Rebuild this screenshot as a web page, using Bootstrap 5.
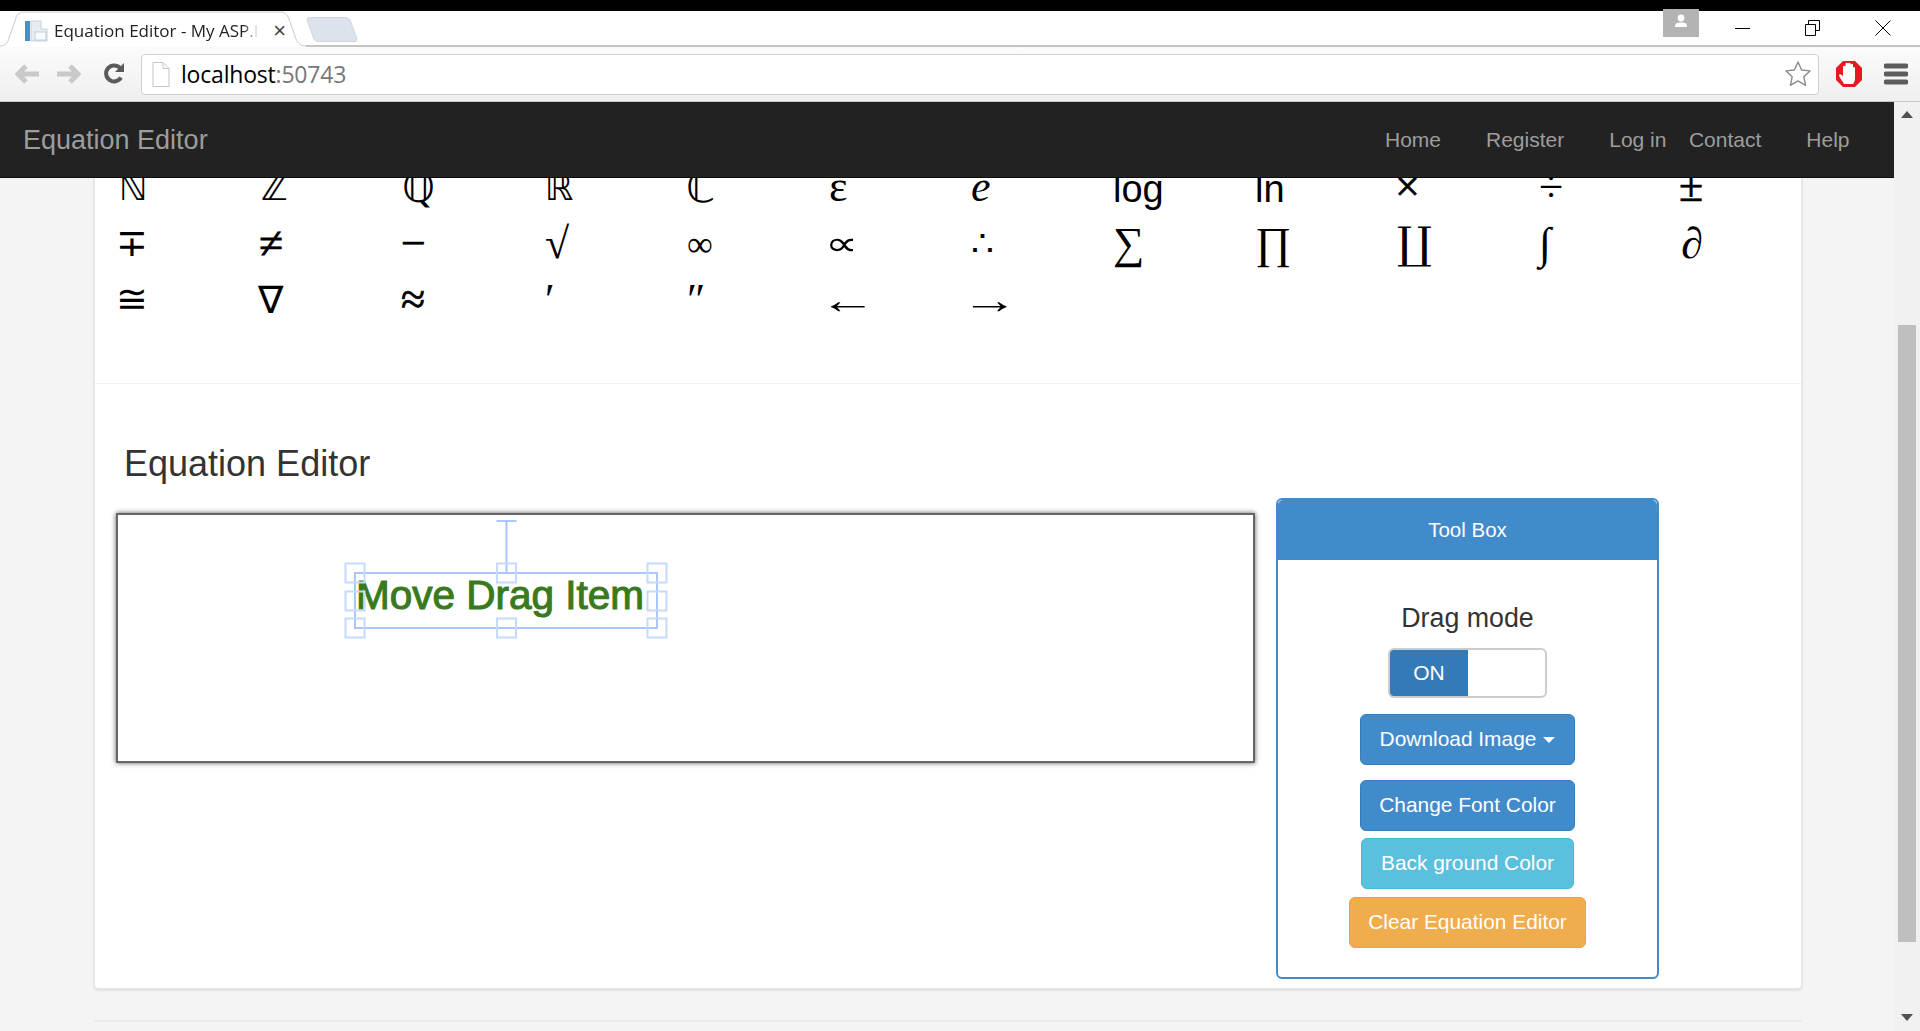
<!DOCTYPE html>
<html lang="en">
<head>
  <meta charset="UTF-8" />
  <title>Equation Editor - My ASP.NET Application</title>
  <link href="https://cdn.jsdelivr.net/npm/bootstrap@5.3.3/dist/css/bootstrap.min.css" rel="stylesheet" />
  <style>
    html, body { height: 1031px; overflow: hidden; }
    body { background: #000; font-family: "Liberation Sans", Arial, sans-serif; color: #333; padding-top: 11px; }
    /* browser window */
    .tab-strip { height: 36px; background: #fff; border-bottom: 2px solid #c4c4c4; }
    .tab-inner { width: 306px; height: 36px; padding: 3px 20px 0 24px; position: relative; background: #fff; flex: none; }
    .tab-edge { position: absolute; left: 0; top: 0; }
    .tab-title { font-family: "Open Sans", sans-serif; font-size: 17px; color: #222; white-space: nowrap; position: relative; margin-left: 6px; -webkit-mask-image: linear-gradient(to right, #000 92%, transparent); }
    .tab-close { font-size: 22px; line-height: 1; color: #444; position: relative; }
    .tab-new { width: 44px; height: 25px; margin: 6px 0 0 4px; background: #dde3ec; border: 1px solid #cfd4dc; border-radius: 4px; transform: skewX(20deg); }
    .win-user { width: 36px; height: 28px; background: #b3b3b3; margin-top: -2px; }
    .win-btns { margin-left: 36px; gap: 54px; padding-right: 29px; padding-top: 9px; }
    .tool-bar { height: 55px; background: linear-gradient(#fbfbfb, #efefef); border-bottom: 1px solid #c8c8c8; padding-left: 15px; }
    .reload-ico { margin-left: 22px; }
    .url-box { width: 1678px; height: 41px; margin-left: 16px; background: #fff; border: 1px solid #cfcfcf; border-radius: 4px; padding: 0 6px 0 10px; }
    .url-text { font-family: "Open Sans", sans-serif; font-size: 23px; margin-left: 11px; color: #000; letter-spacing: -.2px; }
    .url-text span { color: #777; }
    .menu-ico { margin-right: 12px; }
    /* page */
    .view-row { height: 929px; }
    .page-wrap { width: 1894px; background: #f4f4f4; overflow: hidden; }
    .scroll-rail { width: 26px; background: #f1f1f1; padding: 0 2px; }
    .scroll-thumb { height: 617px; background: #bfbfbf; margin: 0 2px; }
    .scroll-up { height: 223px; }
    .top-nav { height: 76px; background: #222; border-bottom: 1px solid #0c0c0c; position: relative; z-index: 5; padding-top: 1px !important; }
    .top-nav .navbar-brand { font-size: 27px; color: #9d9d9d; margin-left: 23px; padding: 0; }
    .top-nav.navbar-expand .navbar-nav .nav-link { font-size: 21px; color: #9d9d9d; padding: 0 22.5px; }
    .top-nav.navbar-expand .navbar-nav .nav-link.tight { padding-right: 0; }
    .top-nav .navbar-nav { margin-right: 22px; }
    .main-panel { width: 1708px; height: 829px; margin: -18px 0 0 94px; border: 1px solid #e6e6e6; border-radius: 4px; box-shadow: 0 1px 3px rgba(0,0,0,.12); }
    .sym-grid { display: grid; grid-template-columns: repeat(12, 142px); grid-auto-rows: 56.5px; height: 223px; padding: 0 0 0 24px; border-bottom: 1px solid #eee; }
    .sym-cell { font-family: "Liberation Serif", "DejaVu Serif", serif; font-size: 44px; line-height: 52px; color: #000; white-space: nowrap; }
    .sym-cell.lat { font-family: "Liberation Sans", sans-serif; font-size: 38px; line-height: 56px; }
    .sym-cell.alt { font-family: "DejaVu Sans", sans-serif; font-size: 36px; line-height: 54px; }
    .sym-cell.big { font-size: 42px; margin-left: -1px; }
    .sym-cell.mid { font-family: "DejaVu Sans", sans-serif; font-size: 38px; line-height: 50px; margin-left: -3px; }
    .sym-cell.heavy { -webkit-text-stroke: .7px #000; margin-left: -2px; }
    .sym-cell.small-sym { font-size: 36px; }
    .sym-cell.prop { font-family: "DejaVu Sans", sans-serif; font-size: 34px; line-height: 50px; }
    .sym-cell.prop b { display: inline-block; font-weight: 400; transform: scaleX(1.35); transform-origin: left center; margin-left: -4px; }
    .sym-cell.nabla { font-family: "DejaVu Sans", sans-serif; font-size: 38px; line-height: 52px; margin-left: -3px; }
    .sym-cell.wide { font-size: 38px; line-height: 52px; }
    .sym-cell.wide b { display: inline-block; font-weight: 400; transform: scaleX(1.5); transform-origin: left center; margin-left: -10px; }
    .editor-title { font-size: 36px; font-weight: 400; margin: 59px 0 0 29px; line-height: 42px; color: #333; }
    .editor-row { margin: 14px 0 0 21px; gap: 21px; }
    .draw-box { width: 1139px; height: 250px; margin-top: 14px; flex: none; position: relative; background: #fff; border: 2px solid #666; box-shadow: 0 0 5px rgba(0,0,0,.65); }
    .draw-text { position: absolute; left: 238px; top: 55px; font-size: 40.5px; line-height: 50px; color: #3a7a1e; -webkit-text-stroke: 1.1px #3a7a1e; white-space: nowrap; }
    .draw-sel { position: absolute; left: 222px; top: 1px; }
    .tool-panel { width: 383px; height: 481px; margin-top: -1px; border: 2px solid #428bca; border-radius: 6px; }
    .tool-head { height: 60px; background: #428bca; color: #fff; font-size: 20.5px; line-height: 60px; text-align: center; border-radius: 3px 3px 0 0; padding: 0; border: 0; }
    .drag-label { font-size: 26.8px; line-height: 32px; margin-top: 42px; }
    .drag-switch { width: 159px; height: 50px; margin-top: 14px; border: 2px solid #ccc; border-radius: 6px; overflow: hidden; }
    .drag-on { width: 78px; background: #337ab7; color: #fff; font-size: 21px; line-height: 46px; text-align: center; }
    .tool-btn { font-size: 20.9px; height: 51px; padding: 0 18.500px; border-radius: 6px; color: #fff; line-height: 1; }
    .tool-btn.blue { background: #428bca; border-color: #357ebd; }
    .tool-btn.aqua { background: #5bc0de; border-color: #46b8da; }
    .tool-btn.amber { background: #f0ad4e; border-color: #eea236; }
    .tool-btn.dropdown-toggle::after { border-top-width: 6px; border-left-width: 6px; border-right-width: 6px; margin-left: 7px; vertical-align: 3px; }
    .foot-line { width: 1708px; height: 2px; background: #ececec; margin: 31px 0 0 94px; }
  </style>
</head>
<body>

  <div class="tab-strip d-flex">
    <div class="tab-inner d-flex align-items-center">
      <svg class="tab-edge" width="306" height="36" viewBox="0 0 306 36" fill="none"><path d="M0 35c6 0 8-4 9-8l7-20c1-4 4-6 8-6h256c4 0 7 2 9 7l7 20c2 4 4 7 10 7" stroke="#c9c9c9"/></svg>
      <svg width="24" height="24" viewBox="0 0 24 24" style="position:relative"><rect x="1" y="2" width="5" height="20" fill="#3f94d0"/><path d="M7 2h10v8h6v12H7z" fill="#e8edf3" stroke="#c9d2dc"/><rect x="11" y="13" width="11" height="8" fill="#f8fafc" stroke="#c4ccd6"/></svg>
      <span class="tab-title">Equation Editor - My ASP.I</span>
      <span class="tab-close ms-auto">×</span>
    </div>
    <div class="tab-new"></div>
    <div class="win-user ms-auto d-flex justify-content-center">
      <svg width="16" height="16" viewBox="0 0 16 16" class="mt-1"><circle cx="8" cy="5" r="3.400" fill="#fff"/><path d="M2 14c0-4 2-4.500 6-4.500s6 .5 6 4.500z" fill="#fff"/></svg>
    </div>
    <div class="win-btns d-flex">
      <svg width="16" height="16" viewBox="0 0 16 16"><path d="M0 8.500h15" stroke="#000"/></svg>
      <svg width="16" height="16" viewBox="0 0 16 16"><path d="M.5 4.500h10v11H.5zM3.500 4.500V.5h11v10h-4" fill="none" stroke="#000"/></svg>
      <svg width="16" height="16" viewBox="0 0 16 16"><path d="M.5.5l15 15M15.500.5l-15 15" stroke="#000"/></svg>
    </div>
  </div>

  <div class="tool-bar d-flex align-items-center">
    <svg width="25" height="20" viewBox="0 0 25 20"><path d="M11 2L3 10l8 8M3 10h21" fill="none" stroke="#c9c9c9" stroke-width="5"/></svg>
    <svg width="25" height="20" viewBox="0 0 25 20" class="ms-3"><path d="M14 2l8 8-8 8M22 10H1" fill="none" stroke="#c9c9c9" stroke-width="5"/></svg>
    <svg width="22" height="24" viewBox="0 0 22 24" class="reload-ico"><path d="M18 15.500A8 8 0 1 1 17 6" fill="none" stroke="#5a5a5a" stroke-width="4"/><path d="M12 10h9V1z" fill="#5a5a5a"/></svg>
    <div class="url-box d-flex align-items-center">
      <svg width="18" height="25" viewBox="0 0 18 25"><path d="M1 .5h10l6 6v18H1z M11 .5v6h6" fill="#fff" stroke="#c4c4c4"/></svg>
      <span class="url-text">localhost<span>:50743</span></span>
      <svg width="28" height="28" viewBox="0 0 28 28" class="ms-auto"><path d="M14 2l3.600 8 8.400.9-6.200 5.800 1.800 8.600L14 20.900l-7.600 4.400 1.800-8.600L2 10.900l8.400-.9z" fill="#fff" stroke="#8a8a8a" stroke-width="1.400" stroke-linejoin="round"/></svg>
    </div>
    <svg width="28" height="28" viewBox="0 0 28 28" class="ms-3"><path d="M8 1h12l7 7v12l-7 7H8l-7-7V8z" fill="#e5191f"/><path d="M9 24c-2-4-5-7-5-9l1-1 3 2V7a1 1 0 0 1 2.500 0V4a1.200 1.200 0 0 1 2.500 0 1.200 1.200 0 0 1 2.500 0v1a1.200 1.200 0 0 1 2.500 0v3a1 1 0 0 1 2 0v10c0 3-1 5-2 6z" fill="#fff"/></svg>
    <svg width="24" height="22" viewBox="0 0 24 22" class="ms-auto menu-ico"><path d="M2 3h20M2 11h20M2 19h20" stroke="#5c5c5c" stroke-width="5" stroke-linecap="round"/></svg>
  </div>

  <div class="view-row d-flex">
    <div class="page-wrap">
      <nav class="navbar navbar-expand navbar-dark top-nav p-0">
        <a class="navbar-brand" href="#">Equation Editor</a>
        <ul class="navbar-nav ms-auto">
          <li class="nav-item"><a class="nav-link" href="#">Home</a></li>
          <li class="nav-item"><a class="nav-link" href="#">Register</a></li>
          <li class="nav-item"><a class="nav-link tight" href="#">Log in</a></li>
          <li class="nav-item"><a class="nav-link" href="#">Contact</a></li>
          <li class="nav-item"><a class="nav-link" href="#">Help</a></li>
        </ul>
      </nav>

      <div class="card main-panel">
        <div class="sym-grid">
          <span class="sym-cell alt">ℕ</span><span class="sym-cell alt">ℤ</span><span class="sym-cell alt big">ℚ</span><span class="sym-cell alt">ℝ</span><span class="sym-cell alt big">ℂ</span><span class="sym-cell">ε</span><span class="sym-cell"><i>e</i></span><span class="sym-cell lat">log</span><span class="sym-cell lat">ln</span><span class="sym-cell heavy">×</span><span class="sym-cell">÷</span><span class="sym-cell heavy">±</span>
          <span class="sym-cell mid">∓</span><span class="sym-cell heavy">≠</span><span class="sym-cell heavy">−</span><span class="sym-cell">√</span><span class="sym-cell small-sym">∞</span><span class="sym-cell prop"><b>∝</b></span><span class="sym-cell small-sym">∴</span><span class="sym-cell">∑</span><span class="sym-cell">∏</span><span class="sym-cell">∐</span><span class="sym-cell">∫</span><span class="sym-cell">∂</span>
          <span class="sym-cell mid">≅</span><span class="sym-cell nabla">∇</span><span class="sym-cell heavy">≈</span><span class="sym-cell">′</span><span class="sym-cell">″</span><span class="sym-cell wide"><b>←</b></span><span class="sym-cell wide"><b>→</b></span>
        </div>

        <h2 class="editor-title">Equation Editor</h2>

        <div class="editor-row d-flex">
          <div class="draw-box">
            <span class="draw-text">Move Drag Item</span>
            <svg class="draw-sel" width="330" height="125" viewBox="0 0 330 125" fill="none">
              <path d="M15 57h302v55H15zM166.500 57V5M156.500 5h20" stroke="#a9c6ff" stroke-width="2"/>
              <g stroke="#c6d9ff" stroke-width="2">
                <rect x="5.500" y="47.500" width="19" height="19"/><rect x="157" y="47.500" width="19" height="19"/><rect x="307.500" y="47.500" width="19" height="19"/>
                <rect x="5.500" y="75.500" width="19" height="19"/><rect x="307.500" y="75.500" width="19" height="19"/>
                <rect x="5.500" y="102.500" width="19" height="19"/><rect x="157" y="102.500" width="19" height="19"/><rect x="307.500" y="102.500" width="19" height="19"/>
              </g>
            </svg>
          </div>

          <div class="card tool-panel">
            <div class="card-header tool-head">Tool Box</div>
            <div class="d-flex flex-column align-items-center">
              <div class="drag-label">Drag mode</div>
              <div class="drag-switch d-flex"><div class="drag-on">ON</div></div>
              <button class="btn tool-btn blue dropdown-toggle mt-3" type="button">Download Image</button>
              <button class="btn tool-btn blue" type="button" style="margin-top:15px">Change Font Color</button>
              <button class="btn tool-btn aqua" type="button" style="margin-top:7px">Back ground Color</button>
              <button class="btn tool-btn amber" type="button" style="margin-top:8px">Clear Equation Editor</button>
            </div>
          </div>
        </div>
      </div>

      <div class="foot-line"></div>
    </div>

    <div class="scroll-rail">
      <div class="scroll-up d-flex justify-content-center pt-2">
        <svg width="14" height="10" viewBox="0 0 14 10"><path d="M7 1l6 7H1z" fill="#505050"/></svg>
      </div>
      <div class="scroll-thumb"></div>
      <div class="d-flex justify-content-center" style="margin-top:70px">
        <svg width="14" height="10" viewBox="0 0 14 10"><path d="M7 9L1 2h12z" fill="#505050"/></svg>
      </div>
    </div>
  </div>

</body>
</html>
